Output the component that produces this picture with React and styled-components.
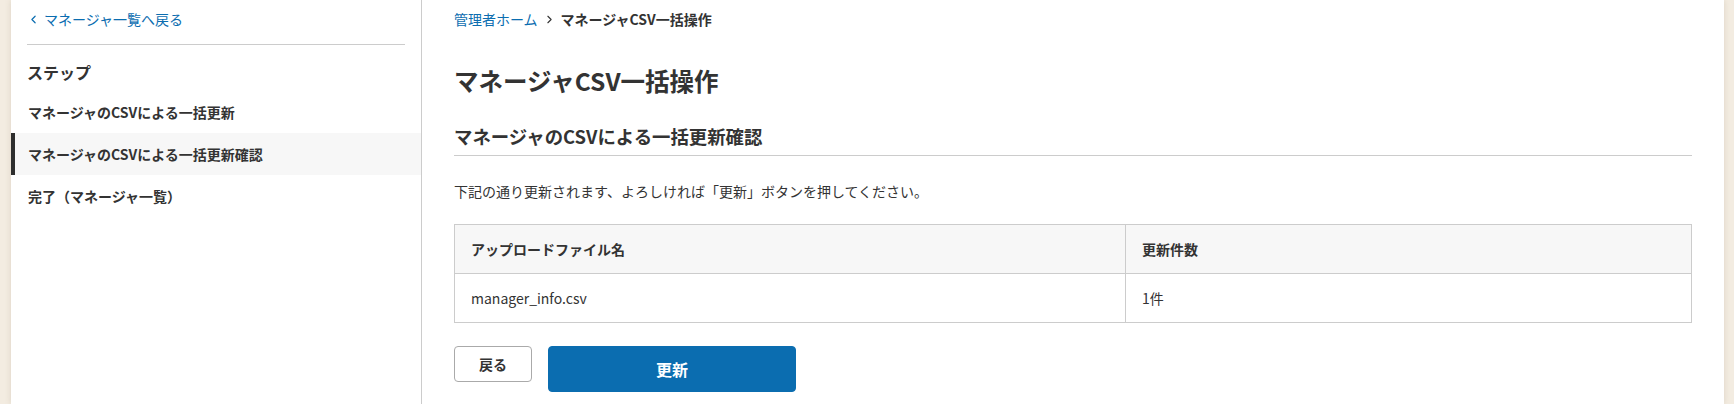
import React from 'react'
import styled, { createGlobalStyle } from 'styled-components'
import { ChevronLeft, ChevronRight } from 'lucide-react'

const GlobalStyle = createGlobalStyle`
  html, body {
    margin: 0;
    padding: 0;
    background: #f3ece1;
  }
  body {
    font-family: "Noto Sans CJK JP", "Noto Sans", sans-serif;
    color: #333;
  }
  * {
    box-sizing: border-box;
  }
`

const Page = styled.div`
  display: flex;
  min-height: 100vh;
  margin: 0 10px 0 11px;
  background: #fff;
  box-shadow: 0 0 6px rgba(120, 100, 70, 0.18);
`

const Sidebar = styled.aside`
  width: 411px;
  flex-shrink: 0;
  border-right: 1px solid #ccc;
`

const BackLink = styled.a`
  display: flex;
  align-items: center;
  gap: 4px;
  padding: 8px 16px 0;
  line-height: 22px;
  font-size: 14px;
  color: #0b6db0;
  text-decoration: none;
`

const Divider = styled.hr`
  margin: 14px 16px 0;
  border: none;
  border-top: 1px solid #ccc;
`

const StepHeading = styled.h2`
  margin: 15px 16px 0;
  font-size: 16px;
  line-height: 24px;
  font-weight: 700;
`

const StepList = styled.ul`
  list-style: none;
  margin: 7px 0 0;
  padding: 0;
`

const StepItem = styled.li`
  position: relative;
  height: 42px;
  display: flex;
  align-items: center;
  padding-left: 17px;
  font-size: 14px;
  font-weight: 700;
  background: ${(p) => (p.$active ? '#f7f7f7' : 'transparent')};

  &::before {
    content: '';
    display: ${(p) => (p.$active ? 'block' : 'none')};
    position: absolute;
    left: 0;
    top: 0;
    bottom: 0;
    width: 4px;
    background: #2e2e2e;
  }
`

const Main = styled.main`
  flex: 1;
  padding: 8px 32px 0 32px;
`

const Breadcrumb = styled.nav`
  display: flex;
  align-items: center;
  gap: 5px;
  font-size: 14px;
  line-height: 22px;

  a {
    color: #0b6db0;
    text-decoration: none;
  }
  strong {
    font-weight: 700;
  }
`

const Title = styled.h1`
  margin: 33px 0 0;
  font-size: 24.5px;
  line-height: 36px;
  font-weight: 700;
`

const SubTitle = styled.h2`
  margin: 23px 0 0;
  padding-bottom: 5px;
  font-size: 18.4px;
  line-height: 28px;
  font-weight: 700;
  border-bottom: 1px solid #ccc;
`

const Lead = styled.p`
  margin: 24px 0 0;
  font-size: 14px;
  line-height: 22px;
`

const Table = styled.table`
  width: 100%;
  margin-top: 22px;
  border-collapse: collapse;
  font-size: 14px;

  th, td {
    height: 49px;
    padding: 0 16px;
    border: 1px solid #ccc;
    text-align: left;
  }
  th {
    background: #f7f7f7;
    font-weight: 700;
  }
  td {
    font-weight: 400;
  }
`

const Actions = styled.div`
  display: flex;
  align-items: flex-start;
  gap: 16px;
  margin-top: 23px;
`

const Button = styled.button`
  font-family: inherit;
  font-weight: 700;
  border-radius: 4px;
  cursor: pointer;
  width: ${(p) => (p.$primary ? '248px' : '78px')};
  height: ${(p) => (p.$primary ? '46px' : '36px')};
  font-size: ${(p) => (p.$primary ? '16px' : '14px')};
  color: ${(p) => (p.$primary ? '#fff' : '#333')};
  background: ${(p) => (p.$primary ? '#0b6db0' : '#fff')};
  border: 1px solid ${(p) => (p.$primary ? '#0b6db0' : '#aaa')};
`

const steps = [
  'マネージャのCSVによる一括更新',
  'マネージャのCSVによる一括更新確認',
  '完了（マネージャ一覧）',
]

export default function App() {
  return (
    <>
      <GlobalStyle />
      <Page>
        <Sidebar>
          <BackLink href="#">
            <ChevronLeft size={13} strokeWidth={2.2} />
            マネージャ一覧へ戻る
          </BackLink>
          <Divider />
          <StepHeading>ステップ</StepHeading>
          <StepList>
            {steps.map((s, i) => (
              <StepItem key={s} $active={i === 1}>{s}</StepItem>
            ))}
          </StepList>
        </Sidebar>
        <Main>
          <Breadcrumb>
            <a href="#">管理者ホーム</a>
            <ChevronRight size={13} strokeWidth={2} />
            <strong>マネージャCSV一括操作</strong>
          </Breadcrumb>
          <Title>マネージャCSV一括操作</Title>
          <SubTitle>マネージャのCSVによる一括更新確認</SubTitle>
          <Lead>下記の通り更新されます、よろしければ「更新」ボタンを押してください。</Lead>
          <Table>
            <thead>
              <tr>
                <th style={{ width: '671px' }}>アップロードファイル名</th>
                <th>更新件数</th>
              </tr>
            </thead>
            <tbody>
              <tr>
                <td>manager_info.csv</td>
                <td>1件</td>
              </tr>
            </tbody>
          </Table>
          <Actions>
            <Button>戻る</Button>
            <Button $primary>更新</Button>
          </Actions>
        </Main>
      </Page>
    </>
  )
}
